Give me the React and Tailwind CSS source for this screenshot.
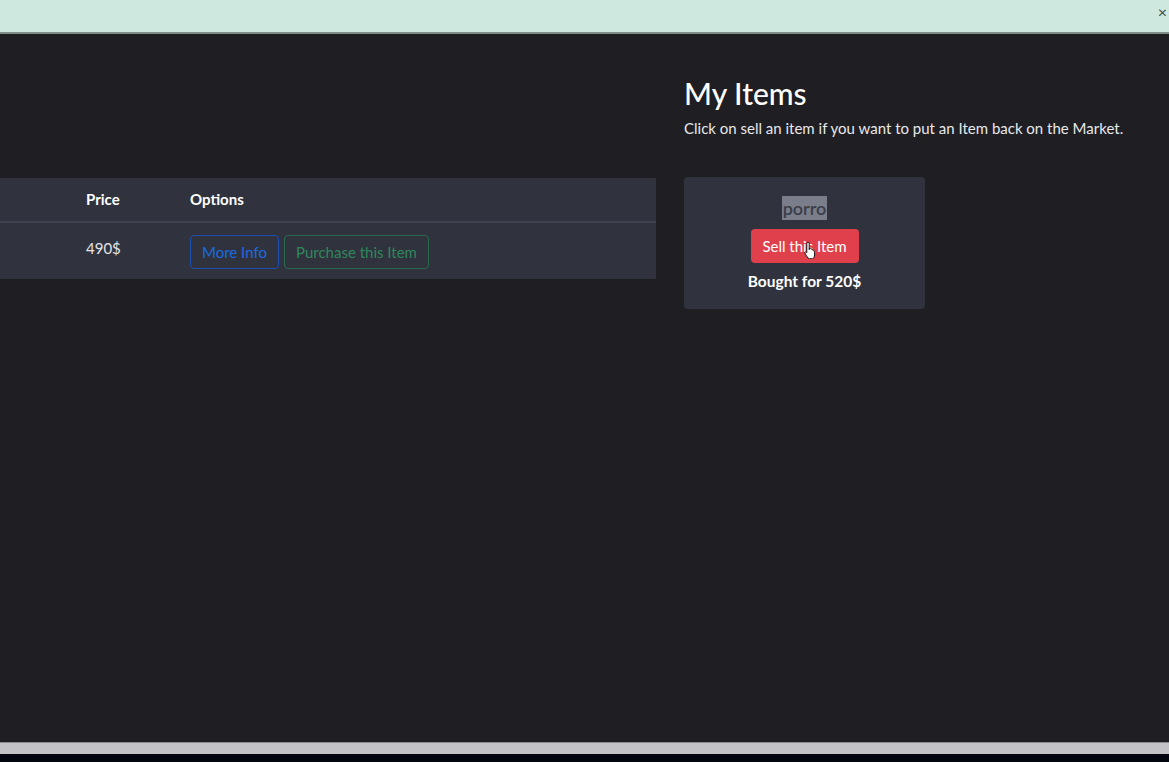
import React from 'react';

const font = { fontFamily: 'Lato, "Noto Sans", sans-serif' };

const HandCursor = () => (
  <svg width="14" height="18" viewBox="0 0 14 18" className="absolute left-[53px] top-[12px]">
    <path
      d="M4 1.2c.7 0 1.2.5 1.2 1.2v6.2l.3-1.4c.6-.3 1.3 0 1.5.6l.1.5c.5-.4 1.3-.2 1.5.4l.1.5c.5-.3 1.2-.1 1.4.5.4 1 .6 2.4.5 4.3-.1 1.8-1 3.2-1.8 3.8H4.9C3.9 17 2.7 15.3 1.6 13.2c-.6-1-.9-1.8-.4-2.2.5-.4 1.2 0 1.6.6V2.4c0-.7.5-1.2 1.2-1.2z"
      fill="#fff"
      stroke="#111"
      strokeWidth="1"
    />
  </svg>
);

const App = () => {
  return (
    <div className="h-screen w-full flex flex-col overflow-hidden bg-[#1e1e23] text-white" style={font}>
      {/* alert bar */}
      <div className="h-[34px] shrink-0 bg-[#cfe8df] border-b-2 border-[#7e8f89] flex items-center justify-end pr-[2px]">
        <span className="text-[#3f4a47] text-base leading-none -mt-[8px]">×</span>
      </div>

      {/* content */}
      <div className="flex-1 flex">
        <div className="w-[656px] shrink-0 pt-[144px]">
          <div className="bg-[#30333e] overflow-hidden">
            <table className="-ml-[8px] text-[15px] border-collapse">
              <thead>
                <tr className="h-[44px] border-b-2 border-[#3e4250]">
                  <th className="w-[86px]"></th>
                  <th className="w-[104px] text-left font-bold px-2 align-middle">Price</th>
                  <th className="w-[474px] text-left font-bold px-2 align-middle">Options</th>
                </tr>
              </thead>
              <tbody>
                <tr className="h-[57px]">
                  <td></td>
                  <td className="px-2 pt-[14px] align-top text-[#e4e4e8]">490$</td>
                  <td className="px-2 pt-[12px] align-top">
                    <div className="flex gap-[5px]">
                      <button className="h-[34px] px-[11px] rounded border border-[#1d4fae] text-[#1c6ae2] text-[15px]">
                        More Info
                      </button>
                      <button className="h-[34px] px-[11px] rounded border border-[#2a6a4c] text-[#2e875c] text-[15px]">
                        Purchase this Item
                      </button>
                    </div>
                  </td>
                </tr>
              </tbody>
            </table>
          </div>
        </div>

        <div className="ml-[28px] pt-[41px]">
          <h2 className="text-[30px] leading-tight font-medium text-white">My Items</h2>
          <p className="mt-[4px] text-[15px] text-[#e8e8ec]">
            Click on sell an item if you want to put an Item back on the Market.
          </p>
          <div className="mt-[38px] w-[241px] h-[132px] rounded bg-[#30333e] flex flex-col items-center pt-[19px]">
            <span className="bg-[#7a7d8a] text-[#3b3e49] text-[18px] leading-[24px] font-semibold px-[1px]">porro</span>
            <div className="relative mt-[9px]">
              <button className="h-[34px] w-[108px] rounded bg-[#e0404c] text-white text-[15px]">
                Sell this Item
              </button>
              <HandCursor />
            </div>
            <p className="mt-[7px] text-[15.5px] font-bold text-white">Bought for 520$</p>
          </div>
        </div>
      </div>

      {/* horizontal scrollbar */}
      <div className="h-[12px] shrink-0 bg-[#c3c3c7] border-t border-[#8a8a90]"></div>
      <div className="h-[8px] shrink-0 bg-[#04060f]"></div>
    </div>
  );
};

export default App;
